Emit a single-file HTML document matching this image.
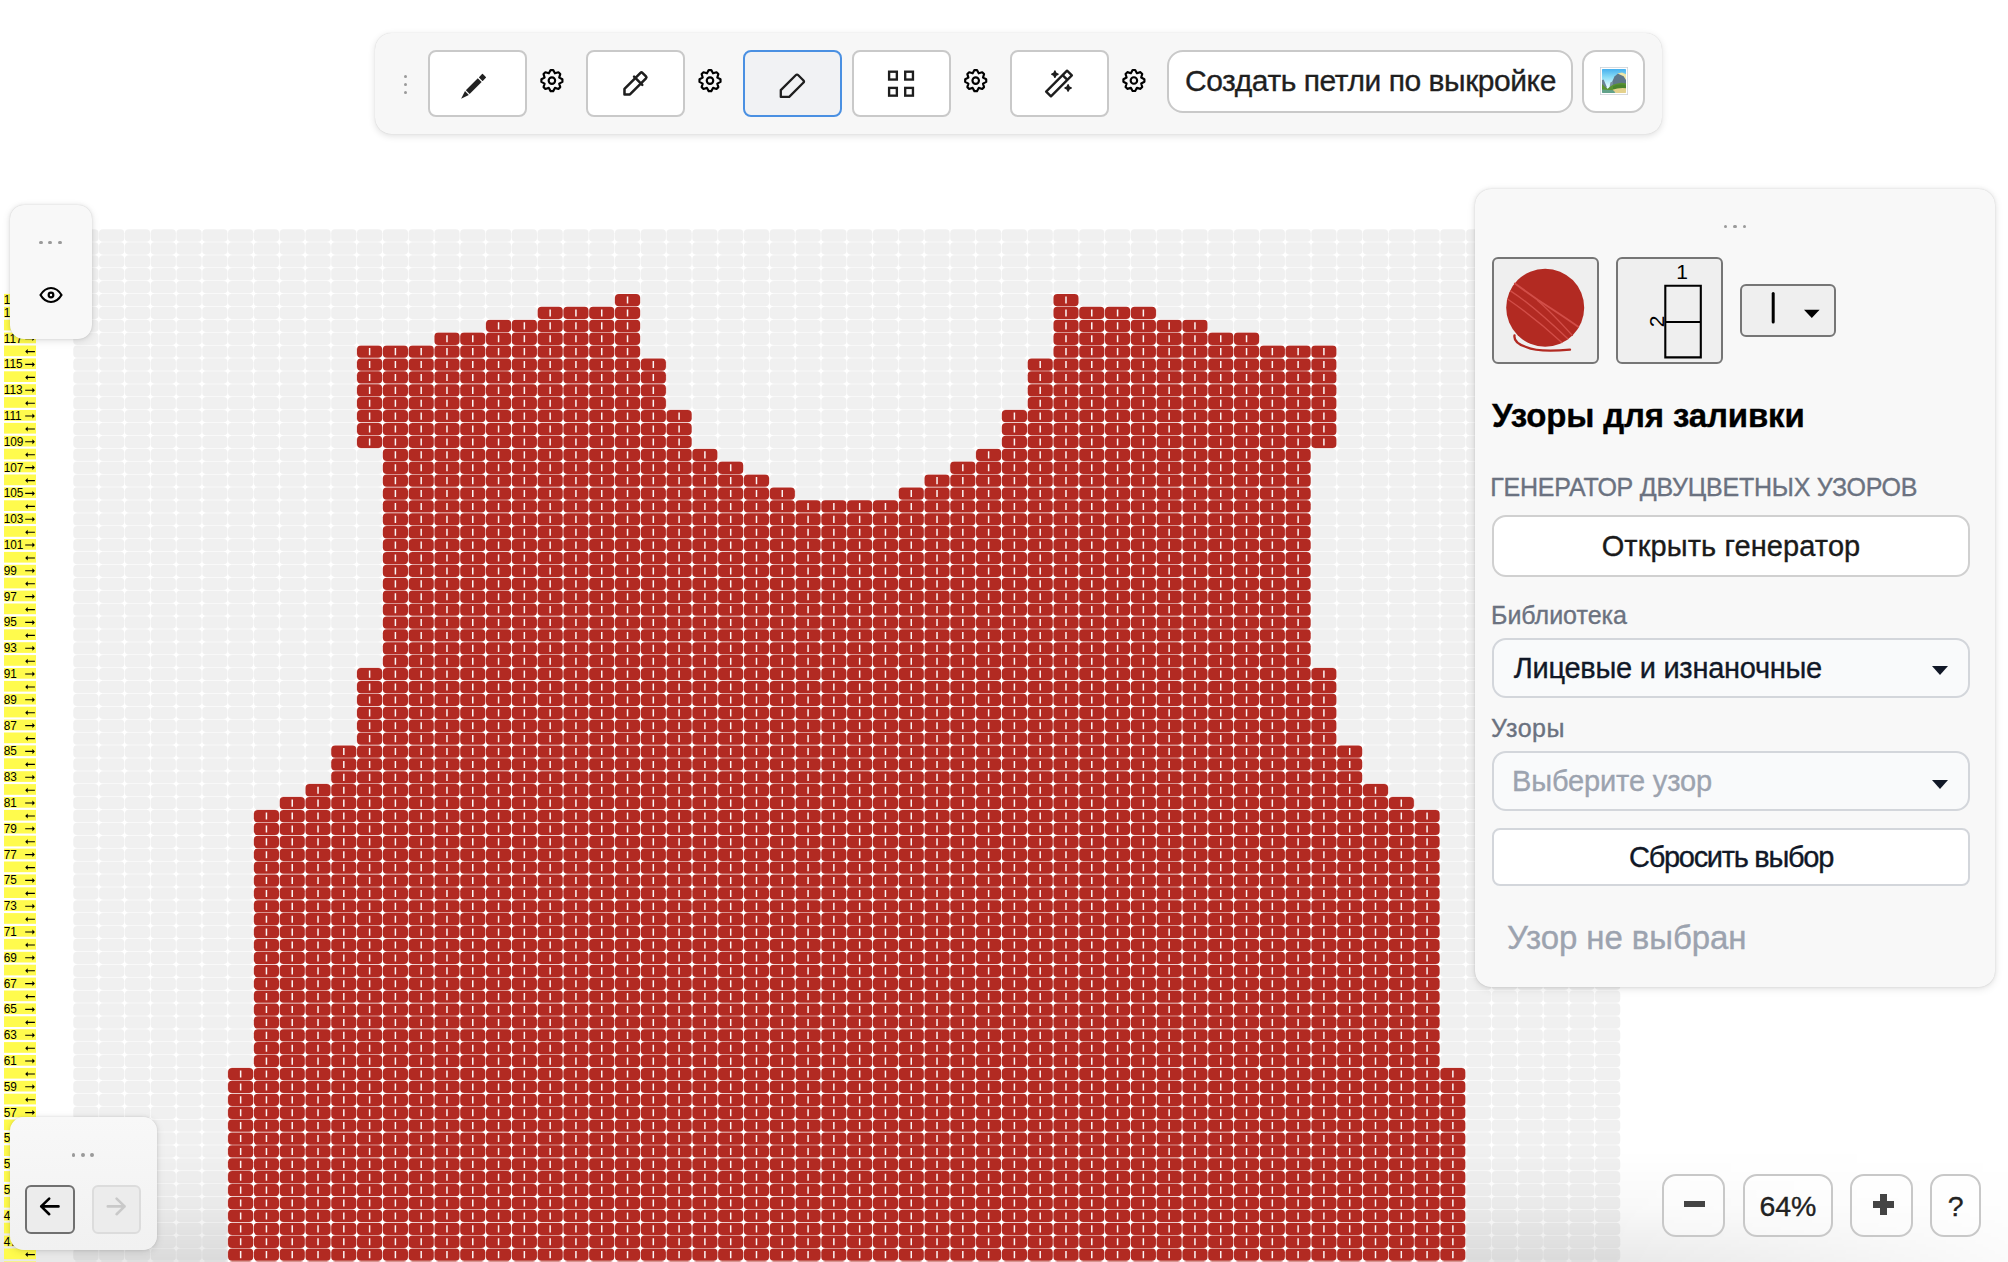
<!DOCTYPE html>
<html><head><meta charset="utf-8">
<style>
html,body{margin:0;padding:0;width:2008px;height:1262px;overflow:hidden;background:#fff;font-family:"Liberation Sans",sans-serif;}
.abs{position:absolute;}
svg{display:block}
.lab{position:absolute;left:4px;width:32px;height:10.8px;background:#FFFB4D;font-size:12px;line-height:10.8px;color:#000;}
.lab .ln{position:absolute;left:0.6px;top:0.4px;}
.lab .ar{position:absolute;right:0.5px;top:0px;font-size:12px;}
.panel{position:absolute;background:#F8F8F8;box-shadow:0 0 1px rgba(0,0,0,0.16),0 0 4px rgba(0,0,0,0.08),0 2px 9px rgba(0,0,0,0.1);}
.dot{position:absolute;width:3.8px;height:3.8px;border-radius:50%;background:#9A9A9A;}
.tbtn{position:absolute;top:50px;width:95px;height:63px;border:2px solid #C9C9C9;border-radius:8px;background:#fff;}
.tbtn.active{border-color:#4A90E2;background:#F1F2F4;}
.gear{position:absolute;top:65.7px;width:30px;height:30px;}
.ptxt{position:absolute;white-space:nowrap;-webkit-text-stroke:0.35px currentColor;}
.zbtn{position:absolute;top:1174.3px;height:59px;border:2px solid #C8C8C8;border-radius:14px;background:rgba(255,255,255,0.35);}
</style></head>
<body>
<!-- grid -->
<svg class="abs" style="left:0;top:0" width="2008" height="1262" viewBox="0 0 2008 1262">
<defs>
<g id="grow" fill="#000" fill-opacity="0.059"><rect x="73.25" y="0.25" width="25.29" height="12.40" rx="3.8"/><rect x="99.04" y="0.25" width="25.29" height="12.40" rx="3.8"/><rect x="124.83" y="0.25" width="25.29" height="12.40" rx="3.8"/><rect x="150.63" y="0.25" width="25.29" height="12.40" rx="3.8"/><rect x="176.42" y="0.25" width="25.29" height="12.40" rx="3.8"/><rect x="202.21" y="0.25" width="25.29" height="12.40" rx="3.8"/><rect x="228.00" y="0.25" width="25.29" height="12.40" rx="3.8"/><rect x="253.79" y="0.25" width="25.29" height="12.40" rx="3.8"/><rect x="279.59" y="0.25" width="25.29" height="12.40" rx="3.8"/><rect x="305.38" y="0.25" width="25.29" height="12.40" rx="3.8"/><rect x="331.17" y="0.25" width="25.29" height="12.40" rx="3.8"/><rect x="356.96" y="0.25" width="25.29" height="12.40" rx="3.8"/><rect x="382.75" y="0.25" width="25.29" height="12.40" rx="3.8"/><rect x="408.55" y="0.25" width="25.29" height="12.40" rx="3.8"/><rect x="434.34" y="0.25" width="25.29" height="12.40" rx="3.8"/><rect x="460.13" y="0.25" width="25.29" height="12.40" rx="3.8"/><rect x="485.92" y="0.25" width="25.29" height="12.40" rx="3.8"/><rect x="511.71" y="0.25" width="25.29" height="12.40" rx="3.8"/><rect x="537.51" y="0.25" width="25.29" height="12.40" rx="3.8"/><rect x="563.30" y="0.25" width="25.29" height="12.40" rx="3.8"/><rect x="589.09" y="0.25" width="25.29" height="12.40" rx="3.8"/><rect x="614.88" y="0.25" width="25.29" height="12.40" rx="3.8"/><rect x="640.67" y="0.25" width="25.29" height="12.40" rx="3.8"/><rect x="666.47" y="0.25" width="25.29" height="12.40" rx="3.8"/><rect x="692.26" y="0.25" width="25.29" height="12.40" rx="3.8"/><rect x="718.05" y="0.25" width="25.29" height="12.40" rx="3.8"/><rect x="743.84" y="0.25" width="25.29" height="12.40" rx="3.8"/><rect x="769.63" y="0.25" width="25.29" height="12.40" rx="3.8"/><rect x="795.43" y="0.25" width="25.29" height="12.40" rx="3.8"/><rect x="821.22" y="0.25" width="25.29" height="12.40" rx="3.8"/><rect x="847.01" y="0.25" width="25.29" height="12.40" rx="3.8"/><rect x="872.80" y="0.25" width="25.29" height="12.40" rx="3.8"/><rect x="898.59" y="0.25" width="25.29" height="12.40" rx="3.8"/><rect x="924.39" y="0.25" width="25.29" height="12.40" rx="3.8"/><rect x="950.18" y="0.25" width="25.29" height="12.40" rx="3.8"/><rect x="975.97" y="0.25" width="25.29" height="12.40" rx="3.8"/><rect x="1001.76" y="0.25" width="25.29" height="12.40" rx="3.8"/><rect x="1027.55" y="0.25" width="25.29" height="12.40" rx="3.8"/><rect x="1053.35" y="0.25" width="25.29" height="12.40" rx="3.8"/><rect x="1079.14" y="0.25" width="25.29" height="12.40" rx="3.8"/><rect x="1104.93" y="0.25" width="25.29" height="12.40" rx="3.8"/><rect x="1130.72" y="0.25" width="25.29" height="12.40" rx="3.8"/><rect x="1156.51" y="0.25" width="25.29" height="12.40" rx="3.8"/><rect x="1182.31" y="0.25" width="25.29" height="12.40" rx="3.8"/><rect x="1208.10" y="0.25" width="25.29" height="12.40" rx="3.8"/><rect x="1233.89" y="0.25" width="25.29" height="12.40" rx="3.8"/><rect x="1259.68" y="0.25" width="25.29" height="12.40" rx="3.8"/><rect x="1285.47" y="0.25" width="25.29" height="12.40" rx="3.8"/><rect x="1311.27" y="0.25" width="25.29" height="12.40" rx="3.8"/><rect x="1337.06" y="0.25" width="25.29" height="12.40" rx="3.8"/><rect x="1362.85" y="0.25" width="25.29" height="12.40" rx="3.8"/><rect x="1388.64" y="0.25" width="25.29" height="12.40" rx="3.8"/><rect x="1414.43" y="0.25" width="25.29" height="12.40" rx="3.8"/><rect x="1440.23" y="0.25" width="25.29" height="12.40" rx="3.8"/><rect x="1466.02" y="0.25" width="25.29" height="12.40" rx="3.8"/><rect x="1491.81" y="0.25" width="25.29" height="12.40" rx="3.8"/><rect x="1517.60" y="0.25" width="25.29" height="12.40" rx="3.8"/><rect x="1543.39" y="0.25" width="25.29" height="12.40" rx="3.8"/><rect x="1569.19" y="0.25" width="25.29" height="12.40" rx="3.8"/><rect x="1594.98" y="0.25" width="25.29" height="12.40" rx="3.8"/></g><g id="rrow"><g fill="#B22A22"><rect x="73.30" y="0.3" width="25.19" height="12.30" rx="4.0"/><rect x="99.09" y="0.3" width="25.19" height="12.30" rx="4.0"/><rect x="124.88" y="0.3" width="25.19" height="12.30" rx="4.0"/><rect x="150.68" y="0.3" width="25.19" height="12.30" rx="4.0"/><rect x="176.47" y="0.3" width="25.19" height="12.30" rx="4.0"/><rect x="202.26" y="0.3" width="25.19" height="12.30" rx="4.0"/><rect x="228.05" y="0.3" width="25.19" height="12.30" rx="4.0"/><rect x="253.84" y="0.3" width="25.19" height="12.30" rx="4.0"/><rect x="279.64" y="0.3" width="25.19" height="12.30" rx="4.0"/><rect x="305.43" y="0.3" width="25.19" height="12.30" rx="4.0"/><rect x="331.22" y="0.3" width="25.19" height="12.30" rx="4.0"/><rect x="357.01" y="0.3" width="25.19" height="12.30" rx="4.0"/><rect x="382.80" y="0.3" width="25.19" height="12.30" rx="4.0"/><rect x="408.60" y="0.3" width="25.19" height="12.30" rx="4.0"/><rect x="434.39" y="0.3" width="25.19" height="12.30" rx="4.0"/><rect x="460.18" y="0.3" width="25.19" height="12.30" rx="4.0"/><rect x="485.97" y="0.3" width="25.19" height="12.30" rx="4.0"/><rect x="511.76" y="0.3" width="25.19" height="12.30" rx="4.0"/><rect x="537.56" y="0.3" width="25.19" height="12.30" rx="4.0"/><rect x="563.35" y="0.3" width="25.19" height="12.30" rx="4.0"/><rect x="589.14" y="0.3" width="25.19" height="12.30" rx="4.0"/><rect x="614.93" y="0.3" width="25.19" height="12.30" rx="4.0"/><rect x="640.72" y="0.3" width="25.19" height="12.30" rx="4.0"/><rect x="666.52" y="0.3" width="25.19" height="12.30" rx="4.0"/><rect x="692.31" y="0.3" width="25.19" height="12.30" rx="4.0"/><rect x="718.10" y="0.3" width="25.19" height="12.30" rx="4.0"/><rect x="743.89" y="0.3" width="25.19" height="12.30" rx="4.0"/><rect x="769.68" y="0.3" width="25.19" height="12.30" rx="4.0"/><rect x="795.48" y="0.3" width="25.19" height="12.30" rx="4.0"/><rect x="821.27" y="0.3" width="25.19" height="12.30" rx="4.0"/><rect x="847.06" y="0.3" width="25.19" height="12.30" rx="4.0"/><rect x="872.85" y="0.3" width="25.19" height="12.30" rx="4.0"/><rect x="898.64" y="0.3" width="25.19" height="12.30" rx="4.0"/><rect x="924.44" y="0.3" width="25.19" height="12.30" rx="4.0"/><rect x="950.23" y="0.3" width="25.19" height="12.30" rx="4.0"/><rect x="976.02" y="0.3" width="25.19" height="12.30" rx="4.0"/><rect x="1001.81" y="0.3" width="25.19" height="12.30" rx="4.0"/><rect x="1027.60" y="0.3" width="25.19" height="12.30" rx="4.0"/><rect x="1053.40" y="0.3" width="25.19" height="12.30" rx="4.0"/><rect x="1079.19" y="0.3" width="25.19" height="12.30" rx="4.0"/><rect x="1104.98" y="0.3" width="25.19" height="12.30" rx="4.0"/><rect x="1130.77" y="0.3" width="25.19" height="12.30" rx="4.0"/><rect x="1156.56" y="0.3" width="25.19" height="12.30" rx="4.0"/><rect x="1182.36" y="0.3" width="25.19" height="12.30" rx="4.0"/><rect x="1208.15" y="0.3" width="25.19" height="12.30" rx="4.0"/><rect x="1233.94" y="0.3" width="25.19" height="12.30" rx="4.0"/><rect x="1259.73" y="0.3" width="25.19" height="12.30" rx="4.0"/><rect x="1285.52" y="0.3" width="25.19" height="12.30" rx="4.0"/><rect x="1311.32" y="0.3" width="25.19" height="12.30" rx="4.0"/><rect x="1337.11" y="0.3" width="25.19" height="12.30" rx="4.0"/><rect x="1362.90" y="0.3" width="25.19" height="12.30" rx="4.0"/><rect x="1388.69" y="0.3" width="25.19" height="12.30" rx="4.0"/><rect x="1414.48" y="0.3" width="25.19" height="12.30" rx="4.0"/><rect x="1440.28" y="0.3" width="25.19" height="12.30" rx="4.0"/><rect x="1466.07" y="0.3" width="25.19" height="12.30" rx="4.0"/><rect x="1491.86" y="0.3" width="25.19" height="12.30" rx="4.0"/><rect x="1517.65" y="0.3" width="25.19" height="12.30" rx="4.0"/><rect x="1543.44" y="0.3" width="25.19" height="12.30" rx="4.0"/><rect x="1569.24" y="0.3" width="25.19" height="12.30" rx="4.0"/><rect x="1595.03" y="0.3" width="25.19" height="12.30" rx="4.0"/></g><path fill="#FFFFFF" fill-opacity="0.95" d="M85.15 2.9h1.5v7.1h-1.5zM110.94 2.9h1.5v7.1h-1.5zM136.73 2.9h1.5v7.1h-1.5zM162.52 2.9h1.5v7.1h-1.5zM188.31 2.9h1.5v7.1h-1.5zM214.11 2.9h1.5v7.1h-1.5zM239.90 2.9h1.5v7.1h-1.5zM265.69 2.9h1.5v7.1h-1.5zM291.48 2.9h1.5v7.1h-1.5zM317.27 2.9h1.5v7.1h-1.5zM343.07 2.9h1.5v7.1h-1.5zM368.86 2.9h1.5v7.1h-1.5zM394.65 2.9h1.5v7.1h-1.5zM420.44 2.9h1.5v7.1h-1.5zM446.23 2.9h1.5v7.1h-1.5zM472.03 2.9h1.5v7.1h-1.5zM497.82 2.9h1.5v7.1h-1.5zM523.61 2.9h1.5v7.1h-1.5zM549.40 2.9h1.5v7.1h-1.5zM575.19 2.9h1.5v7.1h-1.5zM600.99 2.9h1.5v7.1h-1.5zM626.78 2.9h1.5v7.1h-1.5zM652.57 2.9h1.5v7.1h-1.5zM678.36 2.9h1.5v7.1h-1.5zM704.15 2.9h1.5v7.1h-1.5zM729.95 2.9h1.5v7.1h-1.5zM755.74 2.9h1.5v7.1h-1.5zM781.53 2.9h1.5v7.1h-1.5zM807.32 2.9h1.5v7.1h-1.5zM833.11 2.9h1.5v7.1h-1.5zM858.91 2.9h1.5v7.1h-1.5zM884.70 2.9h1.5v7.1h-1.5zM910.49 2.9h1.5v7.1h-1.5zM936.28 2.9h1.5v7.1h-1.5zM962.07 2.9h1.5v7.1h-1.5zM987.87 2.9h1.5v7.1h-1.5zM1013.66 2.9h1.5v7.1h-1.5zM1039.45 2.9h1.5v7.1h-1.5zM1065.24 2.9h1.5v7.1h-1.5zM1091.03 2.9h1.5v7.1h-1.5zM1116.83 2.9h1.5v7.1h-1.5zM1142.62 2.9h1.5v7.1h-1.5zM1168.41 2.9h1.5v7.1h-1.5zM1194.20 2.9h1.5v7.1h-1.5zM1219.99 2.9h1.5v7.1h-1.5zM1245.79 2.9h1.5v7.1h-1.5zM1271.58 2.9h1.5v7.1h-1.5zM1297.37 2.9h1.5v7.1h-1.5zM1323.16 2.9h1.5v7.1h-1.5zM1348.95 2.9h1.5v7.1h-1.5zM1374.75 2.9h1.5v7.1h-1.5zM1400.54 2.9h1.5v7.1h-1.5zM1426.33 2.9h1.5v7.1h-1.5zM1452.12 2.9h1.5v7.1h-1.5zM1477.91 2.9h1.5v7.1h-1.5zM1503.71 2.9h1.5v7.1h-1.5zM1529.50 2.9h1.5v7.1h-1.5zM1555.29 2.9h1.5v7.1h-1.5zM1581.08 2.9h1.5v7.1h-1.5zM1606.87 2.9h1.5v7.1h-1.5z"/></g>
<clipPath id="redclip"><path d="M614.63 293.60h25.79v12.90h-25.79zM1053.10 293.60h25.79v12.90h-25.79zM537.26 306.50h103.17v12.90h-103.17zM1053.10 306.50h103.17v12.90h-103.17zM485.67 319.40h154.75v12.90h-154.75zM1053.10 319.40h154.75v12.90h-154.75zM434.09 332.30h206.34v12.90h-206.34zM1053.10 332.30h206.34v12.90h-206.34zM356.71 345.20h283.71v12.90h-283.71zM1053.10 345.20h283.71v12.90h-283.71zM356.71 358.10h309.50v12.90h-309.50zM1027.30 358.10h309.50v12.90h-309.50zM356.71 371.00h309.50v12.90h-309.50zM1027.30 371.00h309.50v12.90h-309.50zM356.71 383.90h309.50v12.90h-309.50zM1027.30 383.90h309.50v12.90h-309.50zM356.71 396.80h309.50v12.90h-309.50zM1027.30 396.80h309.50v12.90h-309.50zM356.71 409.70h335.30v12.90h-335.30zM1001.51 409.70h335.30v12.90h-335.30zM356.71 422.60h335.30v12.90h-335.30zM1001.51 422.60h335.30v12.90h-335.30zM356.71 435.50h335.30v12.90h-335.30zM1001.51 435.50h335.30v12.90h-335.30zM382.50 448.40h335.30v12.90h-335.30zM975.72 448.40h335.30v12.90h-335.30zM382.50 461.30h361.09v12.90h-361.09zM949.93 461.30h361.09v12.90h-361.09zM382.50 474.20h386.88v12.90h-386.88zM924.14 474.20h386.88v12.90h-386.88zM382.50 487.10h412.67v12.90h-412.67zM898.34 487.10h412.67v12.90h-412.67zM382.50 500.00h928.51v12.90h-928.51zM382.50 512.90h928.51v12.90h-928.51zM382.50 525.80h928.51v12.90h-928.51zM382.50 538.70h928.51v12.90h-928.51zM382.50 551.60h928.51v12.90h-928.51zM382.50 564.50h928.51v12.90h-928.51zM382.50 577.40h928.51v12.90h-928.51zM382.50 590.30h928.51v12.90h-928.51zM382.50 603.20h928.51v12.90h-928.51zM382.50 616.10h928.51v12.90h-928.51zM382.50 629.00h928.51v12.90h-928.51zM382.50 641.90h928.51v12.90h-928.51zM382.50 654.80h928.51v12.90h-928.51zM356.71 667.70h980.10v12.90h-980.10zM356.71 680.60h980.10v12.90h-980.10zM356.71 693.50h980.10v12.90h-980.10zM356.71 706.40h980.10v12.90h-980.10zM356.71 719.30h980.10v12.90h-980.10zM356.71 732.20h980.10v12.90h-980.10zM330.92 745.10h1031.68v12.90h-1031.68zM330.92 758.00h1031.68v12.90h-1031.68zM330.92 770.90h1031.68v12.90h-1031.68zM305.13 783.80h1083.26v12.90h-1083.26zM279.34 796.70h1134.85v12.90h-1134.85zM253.54 809.60h1186.43v12.90h-1186.43zM253.54 822.50h1186.43v12.90h-1186.43zM253.54 835.40h1186.43v12.90h-1186.43zM253.54 848.30h1186.43v12.90h-1186.43zM253.54 861.20h1186.43v12.90h-1186.43zM253.54 874.10h1186.43v12.90h-1186.43zM253.54 887.00h1186.43v12.90h-1186.43zM253.54 899.90h1186.43v12.90h-1186.43zM253.54 912.80h1186.43v12.90h-1186.43zM253.54 925.70h1186.43v12.90h-1186.43zM253.54 938.60h1186.43v12.90h-1186.43zM253.54 951.50h1186.43v12.90h-1186.43zM253.54 964.40h1186.43v12.90h-1186.43zM253.54 977.30h1186.43v12.90h-1186.43zM253.54 990.20h1186.43v12.90h-1186.43zM253.54 1003.10h1186.43v12.90h-1186.43zM253.54 1016.00h1186.43v12.90h-1186.43zM253.54 1028.90h1186.43v12.90h-1186.43zM253.54 1041.80h1186.43v12.90h-1186.43zM253.54 1054.70h1186.43v12.90h-1186.43zM227.75 1067.60h1238.02v12.90h-1238.02zM227.75 1080.50h1238.02v12.90h-1238.02zM227.75 1093.40h1238.02v12.90h-1238.02zM227.75 1106.30h1238.02v12.90h-1238.02zM227.75 1119.20h1238.02v12.90h-1238.02zM227.75 1132.10h1238.02v12.90h-1238.02zM227.75 1145.00h1238.02v12.90h-1238.02zM227.75 1157.90h1238.02v12.90h-1238.02zM227.75 1170.80h1238.02v12.90h-1238.02zM227.75 1183.70h1238.02v12.90h-1238.02zM227.75 1196.60h1238.02v12.90h-1238.02zM227.75 1209.50h1238.02v12.90h-1238.02zM227.75 1222.40h1238.02v12.90h-1238.02zM227.75 1235.30h1238.02v12.90h-1238.02zM227.75 1248.20h1238.02v12.90h-1238.02zM227.75 1261.10h1238.02v12.90h-1238.02z"/></clipPath>
<linearGradient id="shadeV" x1="0" y1="0" x2="0" y2="1"><stop offset="0" stop-color="#000" stop-opacity="0"/><stop offset="0.5" stop-color="#000" stop-opacity="0.025"/><stop offset="1" stop-color="#000" stop-opacity="0.09"/></linearGradient>
<linearGradient id="shadeH" x1="0" y1="0" x2="1" y2="0"><stop offset="0" stop-color="#fff"/><stop offset="0.8" stop-color="#fff"/><stop offset="1" stop-color="#fff" stop-opacity="0.2"/></linearGradient>
<mask id="shadeM" maskUnits="userSpaceOnUse" x="0" y="1150" width="2008" height="112"><rect x="0" y="1150" width="2008" height="112" fill="url(#shadeH)"/></mask>
<clipPath id="gclip"><rect x="73.0" y="229.1" width="1547.52" height="1044.90"/></clipPath>
</defs>
<g><use href="#grow" y="229.10"/><use href="#grow" y="242.00"/><use href="#grow" y="254.90"/><use href="#grow" y="267.80"/><use href="#grow" y="280.70"/><use href="#grow" y="293.60"/><use href="#grow" y="306.50"/><use href="#grow" y="319.40"/><use href="#grow" y="332.30"/><use href="#grow" y="345.20"/><use href="#grow" y="358.10"/><use href="#grow" y="371.00"/><use href="#grow" y="383.90"/><use href="#grow" y="396.80"/><use href="#grow" y="409.70"/><use href="#grow" y="422.60"/><use href="#grow" y="435.50"/><use href="#grow" y="448.40"/><use href="#grow" y="461.30"/><use href="#grow" y="474.20"/><use href="#grow" y="487.10"/><use href="#grow" y="500.00"/><use href="#grow" y="512.90"/><use href="#grow" y="525.80"/><use href="#grow" y="538.70"/><use href="#grow" y="551.60"/><use href="#grow" y="564.50"/><use href="#grow" y="577.40"/><use href="#grow" y="590.30"/><use href="#grow" y="603.20"/><use href="#grow" y="616.10"/><use href="#grow" y="629.00"/><use href="#grow" y="641.90"/><use href="#grow" y="654.80"/><use href="#grow" y="667.70"/><use href="#grow" y="680.60"/><use href="#grow" y="693.50"/><use href="#grow" y="706.40"/><use href="#grow" y="719.30"/><use href="#grow" y="732.20"/><use href="#grow" y="745.10"/><use href="#grow" y="758.00"/><use href="#grow" y="770.90"/><use href="#grow" y="783.80"/><use href="#grow" y="796.70"/><use href="#grow" y="809.60"/><use href="#grow" y="822.50"/><use href="#grow" y="835.40"/><use href="#grow" y="848.30"/><use href="#grow" y="861.20"/><use href="#grow" y="874.10"/><use href="#grow" y="887.00"/><use href="#grow" y="899.90"/><use href="#grow" y="912.80"/><use href="#grow" y="925.70"/><use href="#grow" y="938.60"/><use href="#grow" y="951.50"/><use href="#grow" y="964.40"/><use href="#grow" y="977.30"/><use href="#grow" y="990.20"/><use href="#grow" y="1003.10"/><use href="#grow" y="1016.00"/><use href="#grow" y="1028.90"/><use href="#grow" y="1041.80"/><use href="#grow" y="1054.70"/><use href="#grow" y="1067.60"/><use href="#grow" y="1080.50"/><use href="#grow" y="1093.40"/><use href="#grow" y="1106.30"/><use href="#grow" y="1119.20"/><use href="#grow" y="1132.10"/><use href="#grow" y="1145.00"/><use href="#grow" y="1157.90"/><use href="#grow" y="1170.80"/><use href="#grow" y="1183.70"/><use href="#grow" y="1196.60"/><use href="#grow" y="1209.50"/><use href="#grow" y="1222.40"/><use href="#grow" y="1235.30"/><use href="#grow" y="1248.20"/><use href="#grow" y="1261.10"/></g>
<rect x="0" y="1150" width="2008" height="112" fill="url(#shadeV)" mask="url(#shadeM)"/>
<path d="M614.63 293.60h25.79v12.90h-25.79zM1053.10 293.60h25.79v12.90h-25.79zM537.26 306.50h103.17v12.90h-103.17zM1053.10 306.50h103.17v12.90h-103.17zM485.67 319.40h154.75v12.90h-154.75zM1053.10 319.40h154.75v12.90h-154.75zM434.09 332.30h206.34v12.90h-206.34zM1053.10 332.30h206.34v12.90h-206.34zM356.71 345.20h283.71v12.90h-283.71zM1053.10 345.20h283.71v12.90h-283.71zM356.71 358.10h309.50v12.90h-309.50zM1027.30 358.10h309.50v12.90h-309.50zM356.71 371.00h309.50v12.90h-309.50zM1027.30 371.00h309.50v12.90h-309.50zM356.71 383.90h309.50v12.90h-309.50zM1027.30 383.90h309.50v12.90h-309.50zM356.71 396.80h309.50v12.90h-309.50zM1027.30 396.80h309.50v12.90h-309.50zM356.71 409.70h335.30v12.90h-335.30zM1001.51 409.70h335.30v12.90h-335.30zM356.71 422.60h335.30v12.90h-335.30zM1001.51 422.60h335.30v12.90h-335.30zM356.71 435.50h335.30v12.90h-335.30zM1001.51 435.50h335.30v12.90h-335.30zM382.50 448.40h335.30v12.90h-335.30zM975.72 448.40h335.30v12.90h-335.30zM382.50 461.30h361.09v12.90h-361.09zM949.93 461.30h361.09v12.90h-361.09zM382.50 474.20h386.88v12.90h-386.88zM924.14 474.20h386.88v12.90h-386.88zM382.50 487.10h412.67v12.90h-412.67zM898.34 487.10h412.67v12.90h-412.67zM382.50 500.00h928.51v12.90h-928.51zM382.50 512.90h928.51v12.90h-928.51zM382.50 525.80h928.51v12.90h-928.51zM382.50 538.70h928.51v12.90h-928.51zM382.50 551.60h928.51v12.90h-928.51zM382.50 564.50h928.51v12.90h-928.51zM382.50 577.40h928.51v12.90h-928.51zM382.50 590.30h928.51v12.90h-928.51zM382.50 603.20h928.51v12.90h-928.51zM382.50 616.10h928.51v12.90h-928.51zM382.50 629.00h928.51v12.90h-928.51zM382.50 641.90h928.51v12.90h-928.51zM382.50 654.80h928.51v12.90h-928.51zM356.71 667.70h980.10v12.90h-980.10zM356.71 680.60h980.10v12.90h-980.10zM356.71 693.50h980.10v12.90h-980.10zM356.71 706.40h980.10v12.90h-980.10zM356.71 719.30h980.10v12.90h-980.10zM356.71 732.20h980.10v12.90h-980.10zM330.92 745.10h1031.68v12.90h-1031.68zM330.92 758.00h1031.68v12.90h-1031.68zM330.92 770.90h1031.68v12.90h-1031.68zM305.13 783.80h1083.26v12.90h-1083.26zM279.34 796.70h1134.85v12.90h-1134.85zM253.54 809.60h1186.43v12.90h-1186.43zM253.54 822.50h1186.43v12.90h-1186.43zM253.54 835.40h1186.43v12.90h-1186.43zM253.54 848.30h1186.43v12.90h-1186.43zM253.54 861.20h1186.43v12.90h-1186.43zM253.54 874.10h1186.43v12.90h-1186.43zM253.54 887.00h1186.43v12.90h-1186.43zM253.54 899.90h1186.43v12.90h-1186.43zM253.54 912.80h1186.43v12.90h-1186.43zM253.54 925.70h1186.43v12.90h-1186.43zM253.54 938.60h1186.43v12.90h-1186.43zM253.54 951.50h1186.43v12.90h-1186.43zM253.54 964.40h1186.43v12.90h-1186.43zM253.54 977.30h1186.43v12.90h-1186.43zM253.54 990.20h1186.43v12.90h-1186.43zM253.54 1003.10h1186.43v12.90h-1186.43zM253.54 1016.00h1186.43v12.90h-1186.43zM253.54 1028.90h1186.43v12.90h-1186.43zM253.54 1041.80h1186.43v12.90h-1186.43zM253.54 1054.70h1186.43v12.90h-1186.43zM227.75 1067.60h1238.02v12.90h-1238.02zM227.75 1080.50h1238.02v12.90h-1238.02zM227.75 1093.40h1238.02v12.90h-1238.02zM227.75 1106.30h1238.02v12.90h-1238.02zM227.75 1119.20h1238.02v12.90h-1238.02zM227.75 1132.10h1238.02v12.90h-1238.02zM227.75 1145.00h1238.02v12.90h-1238.02zM227.75 1157.90h1238.02v12.90h-1238.02zM227.75 1170.80h1238.02v12.90h-1238.02zM227.75 1183.70h1238.02v12.90h-1238.02zM227.75 1196.60h1238.02v12.90h-1238.02zM227.75 1209.50h1238.02v12.90h-1238.02zM227.75 1222.40h1238.02v12.90h-1238.02zM227.75 1235.30h1238.02v12.90h-1238.02zM227.75 1248.20h1238.02v12.90h-1238.02zM227.75 1261.10h1238.02v12.90h-1238.02z" fill="#fff"/>
<g clip-path="url(#redclip)"><use href="#rrow" y="293.60"/><use href="#rrow" y="306.50"/><use href="#rrow" y="319.40"/><use href="#rrow" y="332.30"/><use href="#rrow" y="345.20"/><use href="#rrow" y="358.10"/><use href="#rrow" y="371.00"/><use href="#rrow" y="383.90"/><use href="#rrow" y="396.80"/><use href="#rrow" y="409.70"/><use href="#rrow" y="422.60"/><use href="#rrow" y="435.50"/><use href="#rrow" y="448.40"/><use href="#rrow" y="461.30"/><use href="#rrow" y="474.20"/><use href="#rrow" y="487.10"/><use href="#rrow" y="500.00"/><use href="#rrow" y="512.90"/><use href="#rrow" y="525.80"/><use href="#rrow" y="538.70"/><use href="#rrow" y="551.60"/><use href="#rrow" y="564.50"/><use href="#rrow" y="577.40"/><use href="#rrow" y="590.30"/><use href="#rrow" y="603.20"/><use href="#rrow" y="616.10"/><use href="#rrow" y="629.00"/><use href="#rrow" y="641.90"/><use href="#rrow" y="654.80"/><use href="#rrow" y="667.70"/><use href="#rrow" y="680.60"/><use href="#rrow" y="693.50"/><use href="#rrow" y="706.40"/><use href="#rrow" y="719.30"/><use href="#rrow" y="732.20"/><use href="#rrow" y="745.10"/><use href="#rrow" y="758.00"/><use href="#rrow" y="770.90"/><use href="#rrow" y="783.80"/><use href="#rrow" y="796.70"/><use href="#rrow" y="809.60"/><use href="#rrow" y="822.50"/><use href="#rrow" y="835.40"/><use href="#rrow" y="848.30"/><use href="#rrow" y="861.20"/><use href="#rrow" y="874.10"/><use href="#rrow" y="887.00"/><use href="#rrow" y="899.90"/><use href="#rrow" y="912.80"/><use href="#rrow" y="925.70"/><use href="#rrow" y="938.60"/><use href="#rrow" y="951.50"/><use href="#rrow" y="964.40"/><use href="#rrow" y="977.30"/><use href="#rrow" y="990.20"/><use href="#rrow" y="1003.10"/><use href="#rrow" y="1016.00"/><use href="#rrow" y="1028.90"/><use href="#rrow" y="1041.80"/><use href="#rrow" y="1054.70"/><use href="#rrow" y="1067.60"/><use href="#rrow" y="1080.50"/><use href="#rrow" y="1093.40"/><use href="#rrow" y="1106.30"/><use href="#rrow" y="1119.20"/><use href="#rrow" y="1132.10"/><use href="#rrow" y="1145.00"/><use href="#rrow" y="1157.90"/><use href="#rrow" y="1170.80"/><use href="#rrow" y="1183.70"/><use href="#rrow" y="1196.60"/><use href="#rrow" y="1209.50"/><use href="#rrow" y="1222.40"/><use href="#rrow" y="1235.30"/><use href="#rrow" y="1248.20"/><use href="#rrow" y="1261.10"/></g>
</svg>

<!-- row labels -->
<svg class="abs" style="left:0;top:0" width="40" height="1262" viewBox="0 0 40 1262">
<defs><path id="arR" d="M0 -0.55H7.2V-2.5L9.7 0L7.2 2.5V0.55H0Z"/><path id="arL" d="M9.7 -0.55H2.5V-2.5L0 0L2.5 2.5V0.55H9.7Z"/></defs>
<g fill="#FFFB4D">
<rect x="4" y="293.90" width="32" height="10.7"/>
<rect x="4" y="306.80" width="32" height="10.7"/>
<rect x="4" y="319.70" width="32" height="10.7"/>
<rect x="4" y="332.60" width="32" height="10.7"/>
<rect x="4" y="345.50" width="32" height="10.7"/>
<rect x="4" y="358.40" width="32" height="10.7"/>
<rect x="4" y="371.30" width="32" height="10.7"/>
<rect x="4" y="384.20" width="32" height="10.7"/>
<rect x="4" y="397.10" width="32" height="10.7"/>
<rect x="4" y="410.00" width="32" height="10.7"/>
<rect x="4" y="422.90" width="32" height="10.7"/>
<rect x="4" y="435.80" width="32" height="10.7"/>
<rect x="4" y="448.70" width="32" height="10.7"/>
<rect x="4" y="461.60" width="32" height="10.7"/>
<rect x="4" y="474.50" width="32" height="10.7"/>
<rect x="4" y="487.40" width="32" height="10.7"/>
<rect x="4" y="500.30" width="32" height="10.7"/>
<rect x="4" y="513.20" width="32" height="10.7"/>
<rect x="4" y="526.10" width="32" height="10.7"/>
<rect x="4" y="539.00" width="32" height="10.7"/>
<rect x="4" y="551.90" width="32" height="10.7"/>
<rect x="4" y="564.80" width="32" height="10.7"/>
<rect x="4" y="577.70" width="32" height="10.7"/>
<rect x="4" y="590.60" width="32" height="10.7"/>
<rect x="4" y="603.50" width="32" height="10.7"/>
<rect x="4" y="616.40" width="32" height="10.7"/>
<rect x="4" y="629.30" width="32" height="10.7"/>
<rect x="4" y="642.20" width="32" height="10.7"/>
<rect x="4" y="655.10" width="32" height="10.7"/>
<rect x="4" y="668.00" width="32" height="10.7"/>
<rect x="4" y="680.90" width="32" height="10.7"/>
<rect x="4" y="693.80" width="32" height="10.7"/>
<rect x="4" y="706.70" width="32" height="10.7"/>
<rect x="4" y="719.60" width="32" height="10.7"/>
<rect x="4" y="732.50" width="32" height="10.7"/>
<rect x="4" y="745.40" width="32" height="10.7"/>
<rect x="4" y="758.30" width="32" height="10.7"/>
<rect x="4" y="771.20" width="32" height="10.7"/>
<rect x="4" y="784.10" width="32" height="10.7"/>
<rect x="4" y="797.00" width="32" height="10.7"/>
<rect x="4" y="809.90" width="32" height="10.7"/>
<rect x="4" y="822.80" width="32" height="10.7"/>
<rect x="4" y="835.70" width="32" height="10.7"/>
<rect x="4" y="848.60" width="32" height="10.7"/>
<rect x="4" y="861.50" width="32" height="10.7"/>
<rect x="4" y="874.40" width="32" height="10.7"/>
<rect x="4" y="887.30" width="32" height="10.7"/>
<rect x="4" y="900.20" width="32" height="10.7"/>
<rect x="4" y="913.10" width="32" height="10.7"/>
<rect x="4" y="926.00" width="32" height="10.7"/>
<rect x="4" y="938.90" width="32" height="10.7"/>
<rect x="4" y="951.80" width="32" height="10.7"/>
<rect x="4" y="964.70" width="32" height="10.7"/>
<rect x="4" y="977.60" width="32" height="10.7"/>
<rect x="4" y="990.50" width="32" height="10.7"/>
<rect x="4" y="1003.40" width="32" height="10.7"/>
<rect x="4" y="1016.30" width="32" height="10.7"/>
<rect x="4" y="1029.20" width="32" height="10.7"/>
<rect x="4" y="1042.10" width="32" height="10.7"/>
<rect x="4" y="1055.00" width="32" height="10.7"/>
<rect x="4" y="1067.90" width="32" height="10.7"/>
<rect x="4" y="1080.80" width="32" height="10.7"/>
<rect x="4" y="1093.70" width="32" height="10.7"/>
<rect x="4" y="1106.60" width="32" height="10.7"/>
<rect x="4" y="1119.50" width="32" height="10.7"/>
<rect x="4" y="1132.40" width="32" height="10.7"/>
<rect x="4" y="1145.30" width="32" height="10.7"/>
<rect x="4" y="1158.20" width="32" height="10.7"/>
<rect x="4" y="1171.10" width="32" height="10.7"/>
<rect x="4" y="1184.00" width="32" height="10.7"/>
<rect x="4" y="1196.90" width="32" height="10.7"/>
<rect x="4" y="1209.80" width="32" height="10.7"/>
<rect x="4" y="1222.70" width="32" height="10.7"/>
<rect x="4" y="1235.60" width="32" height="10.7"/>
<rect x="4" y="1248.50" width="32" height="10.7"/>
<rect x="4" y="1261.40" width="32" height="10.7"/>
</g><g fill="#000" font-family="Liberation Sans" font-size="12.6">
<text transform="translate(3.7,303.80) scale(0.94,1)">1</text>
<text transform="translate(3.7,316.70) scale(0.94,1)">1</text>
<use href="#arL" x="25.2" y="325.80"/>
<text transform="translate(3.7,342.50) scale(0.94,1)">117</text>
<use href="#arR" x="25.2" y="338.60"/>
<use href="#arL" x="25.2" y="351.60"/>
<text transform="translate(3.7,368.30) scale(0.94,1)">115</text>
<use href="#arR" x="25.2" y="364.40"/>
<use href="#arL" x="25.2" y="377.40"/>
<text transform="translate(3.7,394.10) scale(0.94,1)">113</text>
<use href="#arR" x="25.2" y="390.20"/>
<use href="#arL" x="25.2" y="403.20"/>
<text transform="translate(3.7,419.90) scale(0.94,1)">111</text>
<use href="#arR" x="25.2" y="416.00"/>
<use href="#arL" x="25.2" y="429.00"/>
<text transform="translate(3.7,445.70) scale(0.94,1)">109</text>
<use href="#arR" x="25.2" y="441.80"/>
<use href="#arL" x="25.2" y="454.80"/>
<text transform="translate(3.7,471.50) scale(0.94,1)">107</text>
<use href="#arR" x="25.2" y="467.60"/>
<use href="#arL" x="25.2" y="480.60"/>
<text transform="translate(3.7,497.30) scale(0.94,1)">105</text>
<use href="#arR" x="25.2" y="493.40"/>
<use href="#arL" x="25.2" y="506.40"/>
<text transform="translate(3.7,523.10) scale(0.94,1)">103</text>
<use href="#arR" x="25.2" y="519.20"/>
<use href="#arL" x="25.2" y="532.20"/>
<text transform="translate(3.7,548.90) scale(0.94,1)">101</text>
<use href="#arR" x="25.2" y="545.00"/>
<use href="#arL" x="25.2" y="558.00"/>
<text transform="translate(3.7,574.70) scale(0.94,1)">99</text>
<use href="#arR" x="25.2" y="570.80"/>
<use href="#arL" x="25.2" y="583.80"/>
<text transform="translate(3.7,600.50) scale(0.94,1)">97</text>
<use href="#arR" x="25.2" y="596.60"/>
<use href="#arL" x="25.2" y="609.60"/>
<text transform="translate(3.7,626.30) scale(0.94,1)">95</text>
<use href="#arR" x="25.2" y="622.40"/>
<use href="#arL" x="25.2" y="635.40"/>
<text transform="translate(3.7,652.10) scale(0.94,1)">93</text>
<use href="#arR" x="25.2" y="648.20"/>
<use href="#arL" x="25.2" y="661.20"/>
<text transform="translate(3.7,677.90) scale(0.94,1)">91</text>
<use href="#arR" x="25.2" y="674.00"/>
<use href="#arL" x="25.2" y="687.00"/>
<text transform="translate(3.7,703.70) scale(0.94,1)">89</text>
<use href="#arR" x="25.2" y="699.80"/>
<use href="#arL" x="25.2" y="712.80"/>
<text transform="translate(3.7,729.50) scale(0.94,1)">87</text>
<use href="#arR" x="25.2" y="725.60"/>
<use href="#arL" x="25.2" y="738.60"/>
<text transform="translate(3.7,755.30) scale(0.94,1)">85</text>
<use href="#arR" x="25.2" y="751.40"/>
<use href="#arL" x="25.2" y="764.40"/>
<text transform="translate(3.7,781.10) scale(0.94,1)">83</text>
<use href="#arR" x="25.2" y="777.20"/>
<use href="#arL" x="25.2" y="790.20"/>
<text transform="translate(3.7,806.90) scale(0.94,1)">81</text>
<use href="#arR" x="25.2" y="803.00"/>
<use href="#arL" x="25.2" y="816.00"/>
<text transform="translate(3.7,832.70) scale(0.94,1)">79</text>
<use href="#arR" x="25.2" y="828.80"/>
<use href="#arL" x="25.2" y="841.80"/>
<text transform="translate(3.7,858.50) scale(0.94,1)">77</text>
<use href="#arR" x="25.2" y="854.60"/>
<use href="#arL" x="25.2" y="867.60"/>
<text transform="translate(3.7,884.30) scale(0.94,1)">75</text>
<use href="#arR" x="25.2" y="880.40"/>
<use href="#arL" x="25.2" y="893.40"/>
<text transform="translate(3.7,910.10) scale(0.94,1)">73</text>
<use href="#arR" x="25.2" y="906.20"/>
<use href="#arL" x="25.2" y="919.20"/>
<text transform="translate(3.7,935.90) scale(0.94,1)">71</text>
<use href="#arR" x="25.2" y="932.00"/>
<use href="#arL" x="25.2" y="945.00"/>
<text transform="translate(3.7,961.70) scale(0.94,1)">69</text>
<use href="#arR" x="25.2" y="957.80"/>
<use href="#arL" x="25.2" y="970.80"/>
<text transform="translate(3.7,987.50) scale(0.94,1)">67</text>
<use href="#arR" x="25.2" y="983.60"/>
<use href="#arL" x="25.2" y="996.60"/>
<text transform="translate(3.7,1013.30) scale(0.94,1)">65</text>
<use href="#arR" x="25.2" y="1009.40"/>
<use href="#arL" x="25.2" y="1022.40"/>
<text transform="translate(3.7,1039.10) scale(0.94,1)">63</text>
<use href="#arR" x="25.2" y="1035.20"/>
<use href="#arL" x="25.2" y="1048.20"/>
<text transform="translate(3.7,1064.90) scale(0.94,1)">61</text>
<use href="#arR" x="25.2" y="1061.00"/>
<use href="#arL" x="25.2" y="1074.00"/>
<text transform="translate(3.7,1090.70) scale(0.94,1)">59</text>
<use href="#arR" x="25.2" y="1086.80"/>
<use href="#arL" x="25.2" y="1099.80"/>
<text transform="translate(3.7,1116.50) scale(0.94,1)">57</text>
<use href="#arR" x="25.2" y="1112.60"/>
<use href="#arL" x="25.2" y="1125.60"/>
<text transform="translate(3.7,1142.30) scale(0.94,1)">55</text>
<use href="#arR" x="25.2" y="1138.40"/>
<use href="#arL" x="25.2" y="1151.40"/>
<text transform="translate(3.7,1168.10) scale(0.94,1)">53</text>
<use href="#arR" x="25.2" y="1164.20"/>
<use href="#arL" x="25.2" y="1177.20"/>
<text transform="translate(3.7,1193.90) scale(0.94,1)">51</text>
<use href="#arR" x="25.2" y="1190.00"/>
<use href="#arL" x="25.2" y="1203.00"/>
<text transform="translate(3.7,1219.70) scale(0.94,1)">49</text>
<use href="#arR" x="25.2" y="1215.80"/>
<use href="#arL" x="25.2" y="1228.80"/>
<text transform="translate(3.7,1245.50) scale(0.94,1)">47</text>
<use href="#arR" x="25.2" y="1241.60"/>
<use href="#arL" x="25.2" y="1254.60"/>
<text transform="translate(3.7,1271.30) scale(0.94,1)">45</text>
<use href="#arR" x="25.2" y="1267.40"/>
</g></svg>

<!-- bottom shade -->


<!-- toolbar -->
<div class="panel" style="left:374.6px;top:33.4px;width:1287.6px;height:100.4px;border-radius:16.5px;background:#F7F7F7;box-shadow:0 0 1px rgba(0,0,0,0.18),0 2px 7px rgba(0,0,0,0.13);"></div>
<div class="dot" style="left:403.5px;top:75px;width:3.4px;height:3.4px"></div>
<div class="dot" style="left:403.5px;top:82.7px;width:3.4px;height:3.4px"></div>
<div class="dot" style="left:403.5px;top:90.5px;width:3.4px;height:3.4px"></div>

<div class="tbtn" style="left:427.6px"></div>
<div class="tbtn" style="left:585.7px"></div>
<div class="tbtn active" style="left:743.4px"></div>
<div class="tbtn" style="left:851.8px"></div>
<div class="tbtn" style="left:1009.6px"></div>

<svg class="abs" style="left:0;top:0" width="1700" height="140" viewBox="0 0 1700 140">
<defs>
<path id="gearp" d="M-1.29 -10.52 L1.29 -10.52 L3.02 -7.30 L6.53 -8.35 L8.35 -6.53 L7.30 -3.02 L10.52 -1.29 L10.52 1.29 L7.30 3.02 L8.35 6.53 L6.53 8.35 L3.02 7.30 L1.29 10.52 L-1.29 10.52 L-3.02 7.30 L-6.53 8.35 L-8.35 6.53 L-7.30 3.02 L-10.52 1.29 L-10.52 -1.29 L-7.30 -3.02 L-8.35 -6.53 L-6.53 -8.35 L-3.02 -7.30Z M-3.25 0a3.25 3.25 0 1 0 6.5 0a3.25 3.25 0 1 0 -6.5 0"/>
</defs>
<g fill="none" stroke="#000" stroke-width="2.15" stroke-linecap="round" stroke-linejoin="round">
<use href="#gearp" transform="translate(551.9,80.6)"/>
<use href="#gearp" transform="translate(710,80.6)"/>
<use href="#gearp" transform="translate(975.7,80.6)"/>
<use href="#gearp" transform="translate(1133.9,80.5)"/>
</g>
<!-- pencil filled -->
<g transform="translate(461.1,98.8) rotate(-45)" fill="#222">
<path d="M0 0L8.2 -2.7L8.2 2.7Z"/>
<rect x="9.4" y="-2.7" width="16.9" height="5.4"/>
<rect x="27.7" y="-2.7" width="5.2" height="5.4" rx="0.6"/>
</g>
<!-- eyedropper (tabler color-picker) -->
<g transform="translate(619,67) scale(1.37)" fill="none" stroke="#1E1E1E" stroke-width="1.85" stroke-linecap="round" stroke-linejoin="round">
<path d="M11 7l6 6"/>
<path d="M4 16l11.7 -11.7a1 1 0 0 1 1.4 0l2.6 2.6a1 1 0 0 1 0 1.4l-11.7 11.7h-4v-4z"/>
</g>
<!-- pencil outline -->
<path d="M780.8 96.9L789.2 96.9L803.3 82.8Q804.6 81.5 803.3 80.2L798.3 75.2Q797 73.9 795.7 75.2L780.8 90.1Z" fill="none" stroke="#1E1E1E" stroke-width="2.3" stroke-linejoin="round"/>
<!-- grid icon -->
<g fill="none" stroke="#1E1E1E" stroke-width="2.35">
<rect x="889.1" y="71.7" width="7.75" height="7.85"/>
<rect x="905.2" y="71.7" width="7.75" height="7.85"/>
<rect x="889.1" y="87.9" width="7.75" height="7.75"/>
<rect x="905.2" y="87.9" width="7.75" height="7.75"/>
</g>
<!-- wand -->
<g fill="none" stroke="#1E1E1E" stroke-width="2.4" stroke-linejoin="round">
<path d="M1046.15 91.55L1050.95 96.35L1071.85 75.45L1067.05 70.65Z"/>
<path d="M1062.6 75.1L1067.4 79.9"/>
</g>
<g fill="#1E1E1E" stroke="#1E1E1E" stroke-width="1.5" stroke-linejoin="round"><path d="M1054.9 71.10000000000001Q1055.45 73.65 1058.0 74.2Q1055.45 74.75 1054.9 77.3Q1054.3500000000001 74.75 1051.8000000000002 74.2Q1054.3500000000001 73.65 1054.9 71.10000000000001Z"/><path d="M1068.1 84.80000000000001Q1068.6499999999999 87.35000000000001 1071.1999999999998 87.9Q1068.6499999999999 88.45 1068.1 91.0Q1067.55 88.45 1065.0 87.9Q1067.55 87.35000000000001 1068.1 84.80000000000001Z"/></g>
</svg>

<!-- text button -->
<div class="abs" style="left:1167.3px;top:50.1px;width:401.9px;height:59.3px;border:2px solid #C9C9C9;border-radius:16px;background:#fff;"></div>
<div class="ptxt" id="t_create" style="letter-spacing:-0.45px;left:1185px;top:66.1px;font-size:30px;line-height:30px;color:#1F1F1F;">Создать петли по выкройке</div>
<!-- image button -->
<div class="abs" style="left:1582.4px;top:50.4px;width:58.9px;height:58.8px;border:2px solid #C9C9C9;border-radius:14px;background:#fff;"></div>
<svg class="abs" style="left:1600px;top:67px" width="28" height="28" viewBox="0 0 28 28">
<defs><linearGradient id="sky" x1="0" y1="0" x2="0" y2="1"><stop offset="0" stop-color="#46B0EE"/><stop offset="0.35" stop-color="#8ADCF6"/><stop offset="0.75" stop-color="#E6FCFF"/></linearGradient>
<clipPath id="pic"><rect x="2" y="1.9" width="24" height="24" rx="0.6"/></clipPath></defs>
<rect x="0.4" y="0.4" width="27.2" height="27.2" fill="#fff" stroke="#CDD3D8" stroke-width="0.8"/>
<g clip-path="url(#pic)">
<rect x="2" y="1.9" width="24" height="24" fill="url(#sky)"/>
<path d="M11.5 25L12.3 14.5L14.5 9.5L18 6.5L22 5.8L26 8V25Z" fill="#5F7789"/>
<path d="M17.5 6.6L22 5.5L26 7.2V13L23.6 9.2Z" fill="#EEE7A8"/>
<path d="M2 13L3.6 12.6L6.6 19.5V25H2Z" fill="#6A8294"/>
<path d="M8.6 25L10.4 15.6L12.4 14.6L13.6 25Z" fill="#7A92A2"/>
<path d="M2 17L4.6 19.6L7.6 21.8L10.6 19.2L13.6 17.6L17.6 16.6L21.6 15.8L26 16.4V23.6H2Z" fill="#5A9332"/>
<path d="M13 19.5L16 18L20 17.5L24 17.8L26 18.5V22H13Z" fill="#3F7A2A" opacity="0.6"/>
<path d="M12.6 22.8Q18 20.6 26 21.2V26H15.6Z" fill="#E4D18C"/>
<path d="M2 22.6L12.8 23.2L15.6 26H2Z" fill="#62A28A"/>
</g>
</svg>

<!-- left panel -->
<div class="panel" style="left:10px;top:205px;width:82px;height:134px;border-radius:14px;"></div>
<div class="dot" style="left:39.2px;top:240.7px"></div>
<div class="dot" style="left:48.4px;top:240.7px"></div>
<div class="dot" style="left:57.9px;top:240.7px"></div>
<svg class="abs" style="left:36.74px;top:281.04px" width="28" height="28" viewBox="0 0 24 24" fill="none" stroke="#000" stroke-width="1.9" stroke-linecap="round" stroke-linejoin="round"><path d="M10 12a2 2 0 1 0 4 0a2 2 0 0 0 -4 0"/><path d="M21 12c-2.4 4 -5.4 6 -9 6c-3.6 0 -6.6 -2 -9 -6c2.4 -4 5.4 -6 9 -6c3.6 0 6.6 2 9 6"/></svg>

<!-- bottom-left panel -->
<div class="panel" style="left:10px;top:1117px;width:147px;height:133px;border-radius:14px;background:linear-gradient(#F8F8F8,#F1F1F1);"></div>
<div class="dot" style="left:71.5px;top:1152.8px"></div>
<div class="dot" style="left:80.8px;top:1152.8px"></div>
<div class="dot" style="left:89.9px;top:1152.8px"></div>
<div class="abs" style="left:25.2px;top:1185px;width:45.5px;height:45.4px;border:2px solid #707070;border-radius:6px;background:#ECECEC;"></div>
<div class="abs" style="left:91.5px;top:1185px;width:45px;height:45.4px;border:2px solid #DCDCDC;border-radius:6px;background:#ECECEC;"></div>
<svg class="abs" style="left:0;top:1180px" width="160" height="60" viewBox="0 1180 160 60">
<g fill="none" stroke-width="2.6" stroke-linecap="round" stroke-linejoin="round">
<path d="M58.5 1206.4H41.2M49.2 1198.6L41.2 1206.4L49.2 1214.2" stroke="#000"/>
<path d="M107.8 1206.4H124.6M116.6 1198.6L124.6 1206.4L116.6 1214.2" stroke="#C9C9C9"/>
</g></svg>

<!-- right panel -->
<div class="panel" style="left:1475px;top:188.6px;width:520px;height:798.5px;border-radius:16px;"></div>
<div class="dot" style="left:1723.5px;top:224.6px;width:3.5px;height:3.5px"></div>
<div class="dot" style="left:1733px;top:224.6px;width:3.5px;height:3.5px"></div>
<div class="dot" style="left:1742.6px;top:224.6px;width:3.5px;height:3.5px"></div>

<div class="abs" style="left:1492px;top:257px;width:103px;height:103px;border:2px solid #767676;border-radius:6px;background:#EFEFEF;"></div>
<div class="abs" style="left:1615.6px;top:257px;width:103px;height:103px;border:2px solid #767676;border-radius:6px;background:#EFEFEF;"></div>
<div class="abs" style="left:1739.5px;top:284.3px;width:92px;height:49px;border:2px solid #767676;border-radius:6px;background:#EFEFEF;"></div>
<svg class="abs" style="left:1480px;top:250px" width="380" height="120" viewBox="1480 250 380 120">
<circle cx="1545.2" cy="307.7" r="39" fill="#B22A22"/>
<g fill="none" stroke="#D24E48" stroke-linecap="round">
<path d="M1514.9 283.6 C1524 290 1531 295 1538 300 C1552 309 1566 318 1578.2 326.8" stroke-width="1.9"/>
<path d="M1510.8 291.1 C1528 302 1548 320 1567.8 338.8" stroke-width="1.3"/>
<path d="M1507.8 299.3 C1525 311 1545 327 1561.8 342.5" stroke-width="1.3"/>
<path d="M1537.5 300.5 C1550 311 1561 323 1572.3 335.4" stroke-width="1.3"/>
</g>
<path d="M1514.5 335.4 C1513.5 342 1520 345 1526.1 347 C1535 351 1550 351.5 1570 349.6" fill="none" stroke="#B22A22" stroke-width="2.3" stroke-linecap="round"/>
<path d="M1665.3 357.4V285.8H1700.8V357.4Z" fill="none" stroke="#000" stroke-width="2.1"/>
<path d="M1665.3 322H1700.8" stroke="#000" stroke-width="2.1"/>
<text x="1682" y="279.1" font-family="Liberation Sans" font-size="21" text-anchor="middle" fill="#000">1</text>
<text transform="translate(1664.3,321.5) rotate(-90)" font-family="Liberation Sans" font-size="21" text-anchor="middle" fill="#000">2</text>
<path d="M1773.2 293.5V322" stroke="#000" stroke-width="3" stroke-linecap="round"/>
<path d="M1804 309.8H1819.6L1811.8 317.9Z" fill="#000"/>
</svg>

<div class="ptxt" id="t_heading" style="letter-spacing:-0.15px;left:1492px;top:399.1px;font-size:33px;line-height:33px;font-weight:bold;color:#000;">Узоры для заливки</div>
<div class="ptxt" id="t_gen" style="letter-spacing:-0.23px;left:1490.2px;top:475.2px;font-size:25px;line-height:25px;color:#6B7280;">ГЕНЕРАТОР ДВУЦВЕТНЫХ УЗОРОВ</div>
<div class="abs" style="left:1492px;top:515px;width:474px;height:58px;border:2px solid #D0D0D0;border-radius:14px;background:#fff;"></div>
<div class="ptxt" id="t_open" style="letter-spacing:0.1px;left:1492px;width:478px;text-align:center;top:531.5px;font-size:29px;line-height:29px;color:#1A1A1A;">Открыть генератор</div>
<div class="ptxt" id="t_lib" style="left:1491px;top:602.5px;font-size:25px;line-height:25px;color:#6B7280;">Библиотека</div>
<div class="abs" style="left:1492px;top:638.3px;width:474px;height:55.5px;border:2px solid #D3D6DB;border-radius:14px;background:#F9FAFB;"></div>
<div class="ptxt" id="t_lic" style="letter-spacing:-0.27px;left:1513.8px;top:654.2px;font-size:29px;line-height:29px;color:#111827;">Лицевые и изнаночные</div>
<div class="abs" style="left:1932.2px;top:666.4px;width:0;height:0;border-left:8.2px solid transparent;border-right:8.2px solid transparent;border-top:9.6px solid #111827;"></div>
<div class="ptxt" id="t_uzory" style="letter-spacing:0.5px;left:1491px;top:715.6px;font-size:25px;line-height:25px;color:#6B7280;">Узоры</div>
<div class="abs" style="left:1492px;top:751.3px;width:474px;height:56px;border:2px solid #D3D6DB;border-radius:14px;background:#F9FAFB;"></div>
<div class="ptxt" id="t_vyb" style="letter-spacing:-0.14px;left:1512px;top:767.2px;font-size:29px;line-height:29px;color:#9CA3AF;">Выберите узор</div>
<div class="abs" style="left:1932.2px;top:779.5px;width:0;height:0;border-left:8.2px solid transparent;border-right:8.2px solid transparent;border-top:9.6px solid #111827;"></div>
<div class="abs" style="left:1492px;top:828.3px;width:474px;height:54px;border:2px solid #D3D6DB;border-radius:8px;background:#fff;"></div>
<div class="ptxt" id="t_sbr" style="letter-spacing:-1.29px;left:1492px;width:478px;text-align:center;top:842.5px;font-size:29px;line-height:29px;color:#111827;">Сбросить выбор</div>
<div class="ptxt" id="t_ne" style="letter-spacing:-0.08px;left:1507px;top:921px;font-size:33px;line-height:33px;color:#9CA3AF;">Узор не выбран</div>

<!-- zoom controls -->
<div class="zbtn" style="left:1662.4px;width:59px;"></div>
<div class="zbtn" style="left:1742.6px;width:86.7px;"></div>
<div class="zbtn" style="left:1850.4px;width:59px;"></div>
<div class="zbtn" style="left:1930.4px;width:46.8px;"></div>
<div class="abs" style="left:1683.6px;top:1200.7px;width:21px;height:6.6px;background:#444;"></div>
<div class="ptxt" id="t_64" style="left:1742.6px;width:90.7px;text-align:center;top:1191.8px;font-size:28.5px;line-height:28.5px;color:#222;">64%</div>
<div class="abs" style="left:1873px;top:1201px;width:21.4px;height:6.6px;background:#444;"></div>
<div class="abs" style="left:1880.4px;top:1193.9px;width:6.6px;height:20.7px;background:#444;"></div>
<div class="ptxt" id="t_q" style="left:1930.4px;width:50.8px;text-align:center;top:1191.8px;font-size:28.5px;line-height:28.5px;color:#222;">?</div>
</body></html>
